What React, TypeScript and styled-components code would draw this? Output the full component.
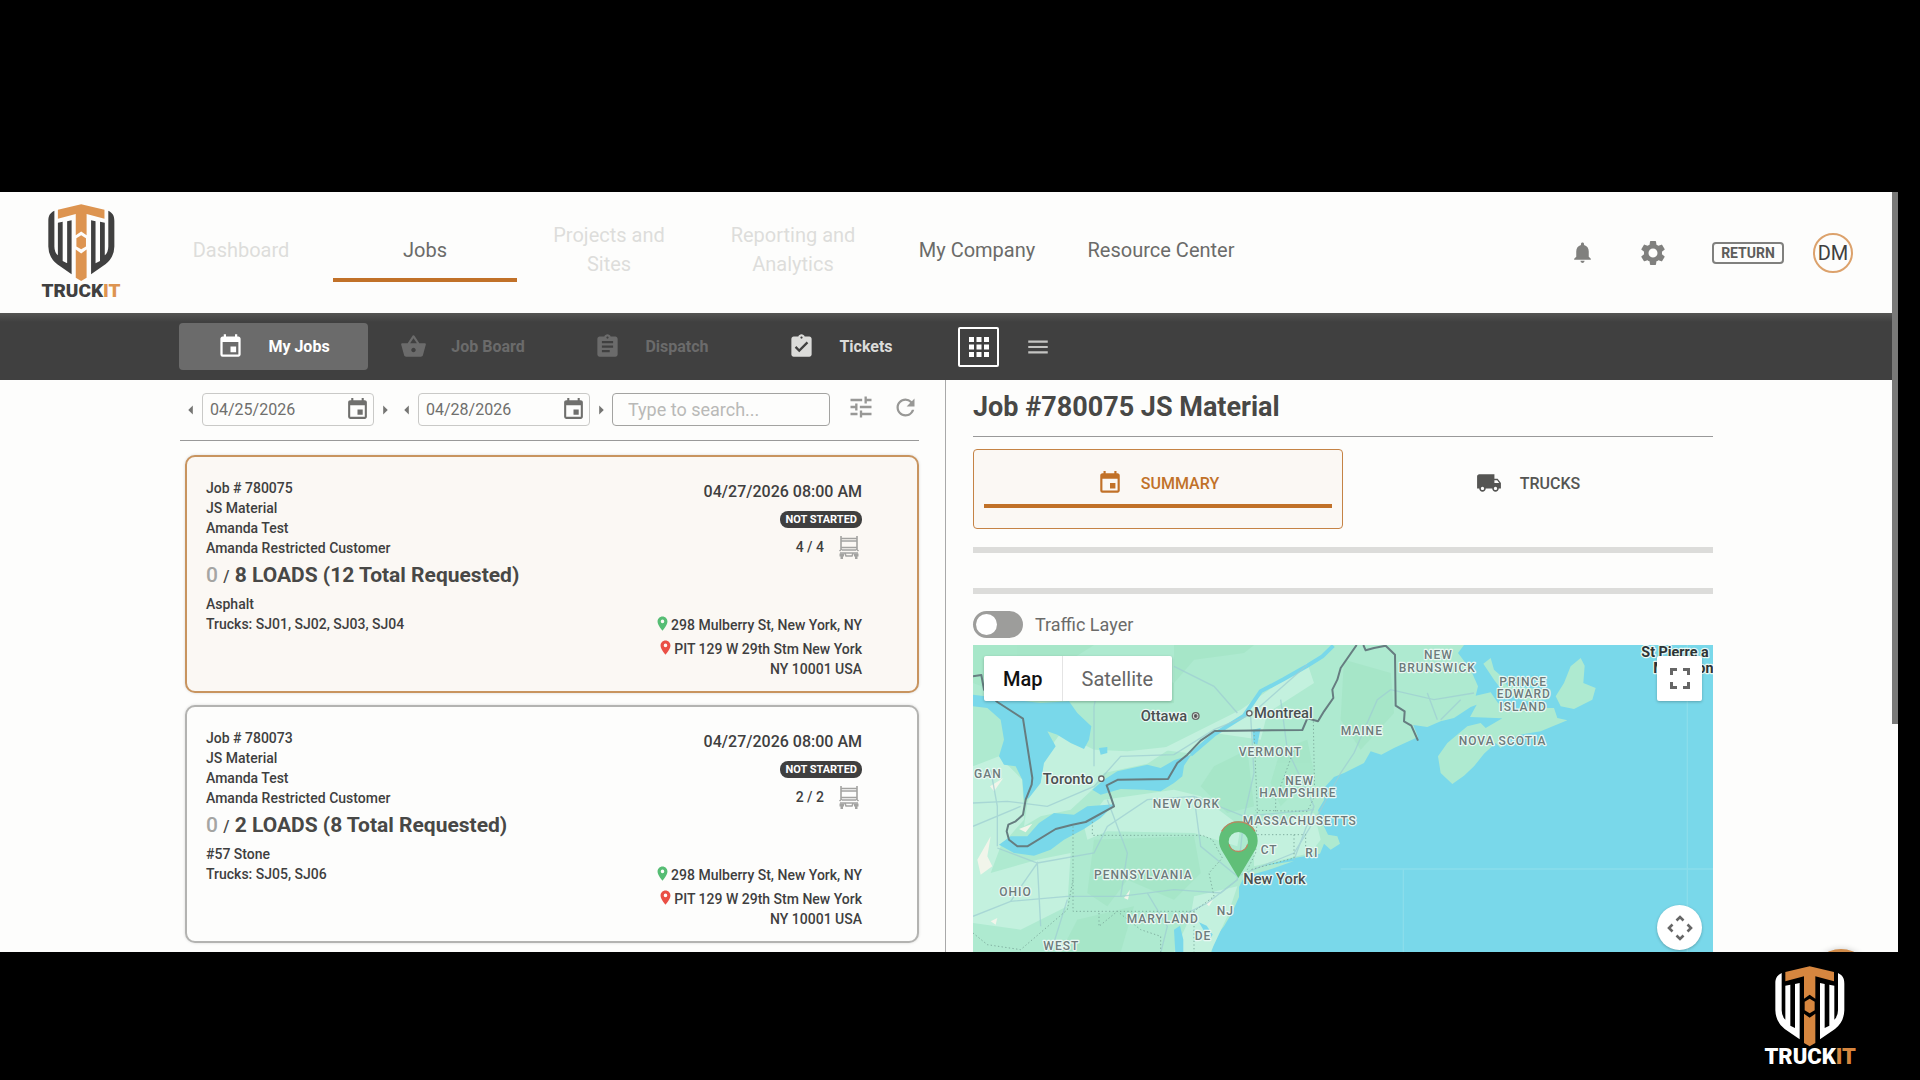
import React, { useState } from "react";
import styled, { createGlobalStyle } from "styled-components";
import {
  MdArrowLeft,
  MdArrowRight,
  MdApps,
  MdAssignment,
  MdAssignmentTurnedIn,
  MdEvent,
  MdLocalShipping,
  MdLocationOn,
  MdMenu,
  MdNotifications,
  MdRefresh,
  MdSettings,
  MdShoppingBasket,
  MdTune,
} from "react-icons/md";

const color = {
  page: "#fdfdfc",
  ink: "#3f3f3f",
  muted: "#6b6b69",
  faint: "#dddddb",
  line: "#a9a9a9",
  orange: "#c17128",
  cream: "#fbf8f4",
  bar: "#404040",
};

const GlobalStyle = createGlobalStyle`
  * { box-sizing: border-box; }
  body { margin: 0; background: #000; color: ${color.ink}; font-family: Roboto, "Liberation Sans", sans-serif; }
  button, input { font: inherit; color: inherit; }
  button { margin: 0; padding: 0; border: 0; background: none; cursor: pointer; }
  a { color: inherit; text-decoration: none; }
  svg { display: block; }
`;

const Stage = styled.div`
  display: grid;
  grid-template-rows: 192px minmax(0, 1fr) 128px;
  height: 100vh;
  overflow: hidden;
`;

const Screen = styled.div`
  grid-row: 2;
  position: relative;
  display: flex;
  margin-right: 22px;
  overflow: hidden;
  background: ${color.page};
`;

const Content = styled.div`
  flex: 1;
  min-width: 0;
  display: flex;
  flex-direction: column;
`;

const ScrollTrack = styled.div`
  width: 6px;
  background: ${color.page};
`;

const ScrollThumb = styled.div`
  height: 70%;
  background: #797978;
`;

const Header = styled.header`
  display: flex;
  min-height: 121px;
  padding: 0 39px 0 42px;
`;

const LogoBox = styled.a<{ $fg: string; $accent: string }>`
  display: flex;
  flex-direction: column;
  align-items: center;
  color: ${(p) => p.$fg};
  em {
    font-style: normal;
    color: ${(p) => p.$accent};
  }
`;

const LogoWord = styled.span<{ $size: number }>`
  font-family: "Liberation Sans Narrow", Roboto, sans-serif;
  font-weight: 900;
  font-size: ${(p) => p.$size}px;
  line-height: 20px;
  text-transform: uppercase;
`;

const HeaderLogo = styled.div`
  width: 78px;
  padding-top: 12px;
`;

const Nav = styled.nav`
  display: flex;
  align-items: flex-start;
  padding: 28px 0 0 29px;
`;

const NavLink = styled.a<{ $off?: boolean; $active?: boolean }>`
  display: flex;
  align-items: center;
  justify-content: center;
  width: 184px;
  height: 62px;
  padding: 2px 24px 0;
  border-bottom: 4px solid ${(p) => (p.$active ? color.orange : "transparent")};
  color: ${(p) => (p.$off ? color.faint : color.muted)};
  font-size: 20px;
  line-height: 29px;
  text-align: center;
`;

const WideNavLink = styled(NavLink)`
  padding: 2px 12px 0;
`;

const HeaderTools = styled.div`
  display: flex;
  align-items: center;
  margin-left: auto;
  color: #80807e;
`;

const IconButton = styled.button<{ $gap?: number }>`
  display: flex;
  align-items: center;
  justify-content: center;
  margin-right: ${(p) => p.$gap ?? 0}px;
`;

const ReturnButton = styled.button`
  height: 22px;
  width: 72px;
  margin-right: 29px;
  border: 2px solid #80807e;
  border-radius: 4px;
  color: #5d5d5b;
  font-size: 14px;
  font-weight: 700;
  line-height: 18px;
`;

const Avatar = styled.button`
  width: 40px;
  height: 40px;
  border: 2px solid #dca26c;
  border-radius: 50%;
  color: ${color.ink};
  font-size: 20px;
  line-height: 36px;
`;

const SubBar = styled.div`
  display: flex;
  align-items: center;
  min-height: 67px;
  padding-left: 179px;
  background: linear-gradient(#555553, ${color.bar} 9px);
`;

const SubTab = styled.button<{ $active?: boolean; $off?: boolean }>`
  display: flex;
  align-items: center;
  justify-content: center;
  gap: 24px;
  width: 189px;
  height: 47px;
  border-radius: 4px;
  background: ${(p) => (p.$active ? "#6b6b6b" : "transparent")};
  color: ${(p) => (p.$active ? "#fff" : p.$off ? "#6b6b6b" : "#dcdcda")};
  font-size: 16px;
  font-weight: 700;
`;

const Views = styled.div`
  display: flex;
  gap: 18px;
  padding-left: 23px;
`;

const ViewButton = styled.button<{ $active?: boolean }>`
  display: flex;
  align-items: center;
  justify-content: center;
  width: 41px;
  height: 40px;
  border: 2px solid ${(p) => (p.$active ? "#fff" : "transparent")};
  border-radius: 2px;
  color: ${(p) => (p.$active ? "#fff" : "#c4c4c2")};
`;

const Main = styled.main`
  flex: 1;
  min-height: 0;
  display: grid;
  grid-template-columns: 1fr 1fr;
`;

const ListPane = styled.section`
  min-width: 0;
  padding: 13px 26px 0 180px;
  border-right: 1px solid ${color.line};
`;

const Filters = styled.form`
  display: flex;
  align-items: flex-start;
  padding-bottom: 14px;
  border-bottom: 1px solid #999;
`;

const Step = styled.button`
  display: flex;
  align-items: center;
  justify-content: center;
  width: 22px;
  height: 33px;
  color: #757573;
`;

const DateField = styled.label`
  display: flex;
  align-items: center;
  justify-content: space-between;
  width: 172px;
  height: 33px;
  padding: 0 3px 0 7px;
  border: 1px solid #c9c9c7;
  border-radius: 4px;
  color: #6f6f6d;
  input {
    width: 110px;
    padding: 0;
    border: 0;
    background: none;
    font-size: 16px;
  }
`;

const Search = styled.input`
  flex: 1;
  min-width: 0;
  height: 33px;
  padding: 0 15px;
  border: 1px solid #a3a3a1;
  border-radius: 4px;
  background: none;
  font-size: 18px;
  &::placeholder {
    color: #b9b9b7;
    opacity: 1;
  }
`;

const FilterTools = styled.div`
  display: flex;
  gap: 17px;
  padding-left: 17px;
  color: #989896;
`;

const Cards = styled.div`
  display: flex;
  flex-direction: column;
  gap: 12px;
  padding: 14px 0 0 5px;
`;

const Card = styled.article<{ $active?: boolean }>`
  display: flex;
  justify-content: space-between;
  min-height: 238px;
  padding: 21px 55px 12px 19px;
  border: 2px solid ${(p) => (p.$active ? "#c8945f" : "#b3b3b1")};
  border-radius: 10px;
  background: ${(p) => (p.$active ? color.cream : color.page)};
  box-shadow: 0 0 3px rgba(0, 0, 0, 0.15);
  font-size: 14px;
  font-weight: 500;
  line-height: 20px;
`;

const CardText = styled.p`
  margin: 0;
`;

const Loads = styled.h3`
  margin: 0;
  color: #484846;
  font-size: 21px;
  font-weight: 700;
  line-height: 34px;
  span {
    color: #a5a5a3;
    font-weight: 500;
  }
  small {
    font-size: 16px;
    font-weight: 500;
  }
`;

const CardSide = styled.div`
  display: flex;
  flex-direction: column;
  align-items: flex-end;
  width: 220px;
  padding-top: 2px;
  text-align: right;
`;

const When = styled.time`
  font-size: 16px;
  line-height: 24px;
`;

const Badge = styled.span`
  margin-top: 7px;
  padding: 0 5px;
  border-radius: 8px;
  background: ${color.ink};
  color: #fff;
  font-size: 11px;
  font-weight: 700;
  line-height: 17px;
`;

const TruckCount = styled.div`
  display: flex;
  align-items: center;
  gap: 14px;
  height: 24px;
  margin-top: 7px;
  padding-right: 2px;
`;

const Addresses = styled.div`
  display: flex;
  flex-direction: column;
  gap: 4px;
  margin-top: auto;
`;

const Address = styled.p`
  margin: 0;
  svg {
    display: inline;
    vertical-align: top;
  }
`;

const DetailPane = styled.section`
  min-width: 0;
  display: flex;
  flex-direction: column;
  padding: 10px 179px 0 27px;
`;

const Title = styled.h1`
  margin: 0;
  padding-bottom: 12px;
  border-bottom: 1px solid #999;
  color: #484846;
  font-size: 27px;
  font-weight: 700;
  line-height: 34px;
`;

const Tabs = styled.div`
  display: grid;
  grid-template-columns: 1fr 1fr;
  margin-top: 12px;
`;

const Tab = styled.button<{ $active?: boolean }>`
  height: 80px;
  padding: 0 10px 8px;
  border: 1px solid ${(p) => (p.$active ? "#c58345" : "transparent")};
  border-radius: 4px;
  background: ${(p) => (p.$active ? color.cream : "transparent")};
  color: ${(p) => (p.$active ? color.orange : "#555553")};
  font-size: 16px;
  font-weight: 500;
`;

const TabLabel = styled.span<{ $active?: boolean }>`
  display: flex;
  align-items: center;
  justify-content: center;
  gap: 18px;
  height: 46px;
  border-bottom: 4px solid ${(p) => (p.$active ? color.orange : "transparent")};
`;

const Bar = styled.hr<{ $gap: number }>`
  width: 100%;
  height: 6px;
  margin: ${(p) => p.$gap}px 0 0;
  border: 0;
  background: #dcdcda;
`;

const Traffic = styled.label`
  display: flex;
  align-items: center;
  gap: 12px;
  margin: 17px 0 7px;
  color: ${color.muted};
  font-size: 18px;
  line-height: 27px;
`;

const Switch = styled.input`
  appearance: none;
  width: 50px;
  height: 27px;
  margin: 0;
  padding: 3px;
  border-radius: 14px;
  background: #9d9d9b;
  cursor: pointer;
  &::before {
    content: "";
    display: block;
    width: 21px;
    height: 21px;
    border-radius: 50%;
    background: #fff;
  }
  &:checked {
    background: ${color.orange};
  }
  &:checked::before {
    margin-left: auto;
  }
`;

const MapBox = styled.div`
  position: relative;
  flex: 1;
  min-height: 0;
  overflow: hidden;
  background: #79d8ea;
`;

const MapSvg = styled.svg`
  width: 100%;
  height: 100%;
  font-family: Roboto, sans-serif;
`;

const MapTypes = styled.div`
  position: absolute;
  top: 11px;
  left: 11px;
  display: flex;
  border-radius: 2px;
  background: #fff;
  box-shadow: 0 1px 3px rgba(0, 0, 0, 0.25);
`;

const MapType = styled.button<{ $active?: boolean }>`
  height: 45px;
  padding: 0 19px;
  color: ${(p) => (p.$active ? "#111" : "#666")};
  font-size: 20px;
  font-weight: ${(p) => (p.$active ? 500 : 400)};
  & + & {
    border-left: 1px solid #e4e4e4;
  }
`;

const MapControl = styled.button<{ $round?: boolean }>`
  position: absolute;
  right: 11px;
  ${(p) => (p.$round ? "bottom: 2px;" : "top: 11px;")}
  display: flex;
  align-items: center;
  justify-content: center;
  width: 45px;
  height: 45px;
  border-radius: ${(p) => (p.$round ? "50%" : "2px")};
  background: #fff;
  box-shadow: 0 1px 3px rgba(0, 0, 0, 0.25);
`;

const HelpButton = styled.button`
  position: absolute;
  right: 27px;
  bottom: -57px;
  width: 60px;
  height: 60px;
  border-radius: 50%;
  background: #d08a48;
  box-shadow: 0 0 6px rgba(0, 0, 0, 0.2);
`;

const Footer = styled.footer`
  grid-row: 3;
  display: flex;
  justify-content: flex-end;
  padding: 14px 64px 0 0;
`;

function Logo({ fg, accent, width, wordSize }: { fg: string; accent: string; width: number; wordSize: number }) {
  const wing =
    "M131 128C118 135 112 142 112 160V240Q113 275 140 296L185 327V158L171 161V293L157 286V163L142 166V268Q131 258 131 240Z";
  return (
    <LogoBox href="#" $fg={fg} $accent={accent}>
      <svg width={width} viewBox="111 107 210 242" aria-hidden="true">
        <g fill={fg}>
          <path d={wing} />
          <path d={wing} transform="translate(431 0) scale(-1 1)" />
        </g>
        <g fill={accent}>
          <path d="M215 108L142 125V153L198 138V205L215 193L232 205V138L288 153V125Z" />
          <path d="M215 205L230 214V240L215 249L200 240V214Z" />
          <path d="M198 250L215 262L232 250V338L215 348L198 338Z" />
        </g>
      </svg>
      <LogoWord $size={wordSize}>
        Truck<em>IT</em>
      </LogoWord>
    </LogoBox>
  );
}

function TruckFront() {
  return (
    <svg width="22" height="24" viewBox="0 0 22 24" fill="none" stroke="#a3a3a1" strokeWidth="1.6" aria-hidden="true">
      <path d="M3 1V15M19 1V15M3 3.5H19M3 6H19M3 12.5H19M4 15H18M2 18H20M1.5 16L4 14M20.5 16L18 14M7 18.5L8 21H14L15 18.5" />
      <path d="M1.500 20H6M16 20H20.500M2.500 22.500H5M17 22.500H19.500" strokeWidth="3" />
    </svg>
  );
}

type Job = { id: string; loads: string; material: string; trucks: string; count: string };

const jobs: Job[] = [
  { id: "780075", loads: "8 LOADS (12 Total Requested)", material: "Asphalt", trucks: "SJ01, SJ02, SJ03, SJ04", count: "4 / 4" },
  { id: "780073", loads: "2 LOADS (8 Total Requested)", material: "#57 Stone", trucks: "SJ05, SJ06", count: "2 / 2" },
];

function JobCard({ job, active }: { job: Job; active: boolean }) {
  return (
    <Card $active={active}>
      <div>
        <CardText>Job # {job.id}</CardText>
        <CardText>JS Material</CardText>
        <CardText>Amanda Test</CardText>
        <CardText>Amanda Restricted Customer</CardText>
        <Loads>
          <span>0</span> <small>/</small> {job.loads}
        </Loads>
        <CardText>{job.material}</CardText>
        <CardText>Trucks: {job.trucks}</CardText>
      </div>
      <CardSide>
        <When>04/27/2026 08:00 AM</When>
        <Badge>NOT STARTED</Badge>
        <TruckCount>
          {job.count}
          <TruckFront />
        </TruckCount>
        <Addresses>
          <Address>
            <MdLocationOn size={17} color="#56bd74" />
            298 Mulberry St, New York, NY
          </Address>
          <Address>
            <MdLocationOn size={17} color="#ea4f45" />
            PIT 129 W 29th Stm New York
            <br />
            NY 10001 USA
          </Address>
        </Addresses>
      </CardSide>
    </Card>
  );
}

const land = [
  "M0 0H1522L1492 40L1530 90L1552 140L1545 168L1590 158L1612 190L1650 215L1700 205L1780 205L1790 235L1820 242L1740 275L1680 285L1640 300L1620 325L1605 310L1570 342L1540 380L1510 408L1475 433L1440 400L1432 350L1460 310L1520 260L1560 250L1575 265L1625 236L1528 232L1548 195L1530 202L1480 235L1440 245L1400 262L1358 256L1372 292L1300 325L1262 345L1230 335L1210 370L1150 400L1120 412L1095 440L1090 482L1072 512L1086 552L1102 585L1130 590L1138 612L1110 630L1090 612L1078 642L1000 655L900 680L1000 664L920 692L850 712L835 742L835 772L815 818L790 860L762 895L752 940H0Z",
  "M1860 55L1872 78L1868 130L1905 145L1895 180L1840 208L1800 200L1785 170L1810 130L1830 80Z",
  "M1568 72L1590 55L1600 90L1625 112L1640 140L1770 150L1765 178L1700 185L1630 160L1600 120Z",
];

const plains = [
  "M250 350L300 280L400 330L500 335L640 320L560 372L430 400L395 450L330 510L240 530L190 560L200 490Z",
  "M37 380L115 350L185 420L190 540L120 620L90 700L230 660L330 640L320 800L180 870L37 850Z",
  "M430 480L640 450L720 470L840 560L830 620L700 580L440 575L380 600L370 560Z",
  "M600 330L840 210L1040 70L1060 130L920 220L900 300L760 280L680 340Z",
  "M700 770L830 740L800 830L750 937H640L690 830Z",
  "M880 560L1060 520L1080 600L1050 640L880 680Z",
];

const forest = [
  "M37 16H400L330 60L440 120L520 90L640 130L700 60L850 40L880 16H640V190H200L37 130Z",
  "M760 380L860 330L880 500L800 520L720 440Z",
  "M400 600L700 590L720 700L640 780L500 720L440 800L380 760Z",
  "M960 330L1040 300L1060 400L960 500L930 430Z",
  "M1150 60L1290 100L1300 220L1200 330L1140 240Z",
  "M350 840L520 800L480 937H300Z",
];

const water = [
  "M37 165L240 190L325 185L350 220L392 260L385 300L370 328L330 310L290 285L260 275L285 320L250 370L240 430L205 475L190 480L185 420L165 380L130 375L115 350L130 300L120 240L80 205L37 200Z",
  "M395 450L430 420L470 395L560 375L600 385L640 362L692 345L670 378L665 410L640 430L600 455L550 450L480 448L420 465Z",
  "M115 615L150 590L200 590L235 550L280 520L340 525L380 500L462 494L420 535L370 568L310 600L270 630L220 648L160 640Z",
  "M640 870L658 858L668 900L668 940H644Z",
  "M715 848L738 858L756 885L745 900Z",
  "M415 325L440 322L440 340L420 345Z",
  "M875 270L900 265L890 315L878 310Z",
];

const roads = [
  "M37 490L140 485L260 500L400 440L480 350L640 345L760 270L870 225L1040 75",
  "M37 830L150 785L320 770L480 770L640 750L780 760L830 720",
  "M110 625L230 670L400 640L440 560L560 480L700 470L850 530L1060 510",
  "M870 230L880 400L850 530L830 720L740 790L660 830",
  "M640 80L760 140L830 220M430 60L400 200L400 380",
  "M150 785L230 670L240 860M480 770L500 640L440 480",
  "M700 470L720 620L830 710L1000 640L1075 520L1140 400L1180 340L1250 180L1290 150L1420 180L1540 160",
  "M1400 160L1430 240M1440 240L1500 180M90 390L110 500L110 620M37 560L180 500",
  "M560 760L620 860L600 940M320 780L270 940M1000 660L1060 500L980 330L960 180",
];

type Label = { x: number; y: number; text: string; city?: boolean };

const labels: Label[] = [
  { x: 540, y: 244, text: "Ottawa", city: true },
  { x: 880, y: 236, text: "Montreal", city: true },
  { x: 246, y: 432, text: "Toronto", city: true },
  { x: 848, y: 733, text: "New York", city: true },
  { x: 40, y: 414, text: "GAN" },
  { x: 576, y: 506, text: "NEW YORK" },
  { x: 834, y: 350, text: "VERMONT" },
  { x: 974, y: 436, text: "NEW" },
  { x: 896, y: 473, text: "HAMPSHIRE" },
  { x: 846, y: 556, text: "MASSACHUSETTS" },
  { x: 900, y: 643, text: "CT" },
  { x: 1034, y: 653, text: "RI" },
  { x: 400, y: 717, text: "PENNSYLVANIA" },
  { x: 116, y: 770, text: "OHIO" },
  { x: 768, y: 827, text: "NJ" },
  { x: 498, y: 850, text: "MARYLAND" },
  { x: 702, y: 900, text: "DE" },
  { x: 248, y: 930, text: "WEST" },
  { x: 1140, y: 286, text: "MAINE" },
  { x: 1390, y: 58, text: "NEW" },
  { x: 1314, y: 96, text: "BRUNSWICK" },
  { x: 1616, y: 138, text: "PRINCE" },
  { x: 1608, y: 176, text: "EDWARD" },
  { x: 1616, y: 213, text: "ISLAND" },
  { x: 1494, y: 316, text: "NOVA SCOTIA" },
];

const MapLabel = styled.text<{ $city?: boolean }>`
  paint-order: stroke;
  fill: ${(p) => (p.$city ? "#4a4f50" : "#6d7b7b")};
  font-size: ${(p) => (p.$city ? 44 : 36)}px;
  font-weight: 500;
  letter-spacing: ${(p) => (p.$city ? 0 : 3)}px;
`;

const IslandLabel = styled.text`
  paint-order: stroke;
  fill: #2d3436;
  font-size: 43px;
  font-weight: 700;
`;

function MapDrawing() {
  return (
    <MapSvg viewBox="37 16 2223 921" preserveAspectRatio="xMinYMin slice" role="img" aria-label="Job map">
      <g stroke="#8addeb" strokeWidth="4">
        <path d="M1140 688H2260M2180 16V937M1328 690V937" />
      </g>
      <g fill="#aeead0">
        {land.map((d) => (
          <path key={d} d={d} />
        ))}
      </g>
      <g fill="#c3f1de">
        {plains.map((d) => (
          <path key={d} d={d} />
        ))}
      </g>
      <g fill="#9fe3c1" opacity="0.5">
        {forest.map((d) => (
          <path key={d} d={d} />
        ))}
      </g>
      <g fill="#79d8ea">
        {water.map((d) => (
          <path key={d} d={d} />
        ))}
      </g>
      <path d="M690 345L760 285L850 228L900 155L970 118L1040 78L1085 50L1118 18" fill="none" stroke="#79d8ea" strokeWidth="12" />
      <g fill="#f1f5ea">
        <path d="M175 568L215 552L195 578Z" />
        <path d="M88 440L128 415L100 455Z" />
        <path d="M50 660L90 590L80 650L95 680L60 705Z" />
        <path d="M90 845L110 835L105 855Z" />
        <path d="M735 790L758 778L745 800Z" />
        <path d="M490 775L508 750L502 780Z" />
      </g>
      <g fill="none" stroke="#9fcfd3" strokeWidth="4" opacity="0.75">
        {roads.map((d) => (
          <path key={d} d={d} />
        ))}
      </g>
      <g fill="none" stroke="#7fae9f" strokeWidth="3" strokeDasharray="4 7">
        <path d="M337 560V815H700L760 770L745 700L785 655L755 600L725 587H395V540" />
        <path d="M880 275L890 510L885 640L860 690M1058 245L1062 470L1040 515L885 512M945 515V480L1000 330M890 585H1035V625M1000 585V655L870 690" />
        <path d="M337 720L320 810L250 870L180 930L80 915L37 880M700 815V937M415 820V860L470 815L540 870L600 890V937" />
      </g>
      <g fill="none" stroke="#667d80" strokeWidth="6" strokeLinejoin="round">
        <path d="M37 110L62 106L70 150L110 187L187 237L215 415L213 435L195 480L187 525L165 545L143 555L138 575L145 600L170 620L200 620L285 568L335 555L375 547L460 500L450 470L438 437L472 420L622 418L650 370L680 345L720 303L762 274L1025 271L1040 236L1072 245L1090 215L1118 175L1115 150L1130 120L1140 85L1188 16" />
        <path d="M1208 16L1215 32L1240 25L1275 18L1303 45L1305 198L1332 215L1330 245L1352 258L1372 303" />
      </g>
      <g fill="#eefaf5" stroke="#666" strokeWidth="4">
        <circle cx="705" cy="229" r="10" />
        <circle cx="705" cy="229" r="4" fill="#444" />
        <circle cx="866" cy="221" r="8" />
        <circle cx="422" cy="417" r="8" />
      </g>
      <g stroke="#e9f8f3" strokeWidth="7" strokeLinejoin="round">
        {labels.map((l) => (
          <MapLabel key={`${l.text}${l.x}`} x={l.x} y={l.y} $city={l.city}>
            {l.text}
          </MapLabel>
        ))}
        <IslandLabel x="2042" y="53">St Pierre a</IslandLabel>
        <IslandLabel x="2078" y="99">Miquelon</IslandLabel>
      </g>
      <path
        d="M833 715L788 640Q775 620 775 603A58 58 0 0 1 891 603Q891 620 878 640ZM833 577A29 29 0 1 0 833 635A29 29 0 1 0 833 577Z"
        fill="#60bf78"
        fillRule="evenodd"
      />
      <g fill="none" stroke="#bd8560" strokeWidth="4">
        <path d="M783 575A58 58 0 0 1 883 575" />
        <path d="M805 614A29 29 0 0 0 861 614" />
      </g>
    </MapSvg>
  );
}

export default function App() {
  const [selected, setSelected] = useState("summary");
  const [view, setView] = useState("grid");
  const [traffic, setTraffic] = useState(false);
  return (
    <Stage>
      <GlobalStyle />
      <Screen>
        <Content>
          <Header>
            <HeaderLogo>
              <Logo fg="#404040" accent="#dd9450" width={67} wordSize={19} />
            </HeaderLogo>
            <Nav>
              <NavLink href="#" $off>Dashboard</NavLink>
              <NavLink href="#" $active>Jobs</NavLink>
              <NavLink href="#" $off>Projects and Sites</NavLink>
              <NavLink href="#" $off>Reporting and Analytics</NavLink>
              <WideNavLink href="#">My Company</WideNavLink>
              <WideNavLink href="#">Resource Center</WideNavLink>
            </Nav>
            <HeaderTools>
              <IconButton aria-label="Notifications" $gap={43}><MdNotifications size={25} /></IconButton>
              <IconButton aria-label="Settings" $gap={44}><MdSettings size={30} /></IconButton>
              <ReturnButton>RETURN</ReturnButton>
              <Avatar>DM</Avatar>
            </HeaderTools>
          </Header>
          <SubBar>
            <SubTab $active><MdEvent size={27} />My Jobs</SubTab>
            <SubTab $off><MdShoppingBasket size={27} />Job Board</SubTab>
            <SubTab $off><MdAssignment size={27} />Dispatch</SubTab>
            <SubTab><MdAssignmentTurnedIn size={27} />Tickets</SubTab>
            <Views>
              <ViewButton aria-label="Grid view" $active={view === "grid"} onClick={() => setView("grid")}>
                <MdApps size={30} />
              </ViewButton>
              <ViewButton aria-label="List view" $active={view === "list"} onClick={() => setView("list")}>
                <MdMenu size={26} />
              </ViewButton>
            </Views>
          </SubBar>
          <Main>
            <ListPane>
              <Filters onSubmit={(e) => e.preventDefault()}>
                <Step type="button" aria-label="Earlier start"><MdArrowLeft size={24} /></Step>
                <DateField>
                  <input aria-label="Start date" defaultValue="04/25/2026" />
                  <MdEvent size={25} />
                </DateField>
                <Step type="button" aria-label="Later start"><MdArrowRight size={24} /></Step>
                <Step type="button" aria-label="Earlier end"><MdArrowLeft size={24} /></Step>
                <DateField>
                  <input aria-label="End date" defaultValue="04/28/2026" />
                  <MdEvent size={25} />
                </DateField>
                <Step type="button" aria-label="Later end"><MdArrowRight size={24} /></Step>
                <Search aria-label="Search jobs" placeholder="Type to search..." />
                <FilterTools>
                  <IconButton type="button" aria-label="Filters"><MdTune size={28} /></IconButton>
                  <IconButton type="button" aria-label="Refresh"><MdRefresh size={27} /></IconButton>
                </FilterTools>
              </Filters>
              <Cards>
                {jobs.map((job, i) => (
                  <JobCard key={job.id} job={job} active={i === 0} />
                ))}
              </Cards>
            </ListPane>
            <DetailPane>
              <Title>Job #780075 JS Material</Title>
              <Tabs>
                <Tab $active={selected === "summary"} onClick={() => setSelected("summary")}>
                  <TabLabel $active={selected === "summary"}><MdEvent size={26} />SUMMARY</TabLabel>
                </Tab>
                <Tab $active={selected === "trucks"} onClick={() => setSelected("trucks")}>
                  <TabLabel $active={selected === "trucks"}><MdLocalShipping size={26} />TRUCKS</TabLabel>
                </Tab>
              </Tabs>
              <Bar $gap={18} />
              <Bar $gap={35} />
              <Traffic>
                <Switch type="checkbox" checked={traffic} onChange={(e) => setTraffic(e.target.checked)} />
                Traffic Layer
              </Traffic>
              <MapBox>
                <MapDrawing />
                <MapTypes>
                  <MapType $active>Map</MapType>
                  <MapType>Satellite</MapType>
                </MapTypes>
                <MapControl aria-label="Full screen">
                  <svg width="20" height="21" viewBox="0 0 20 21" fill="none" stroke="#666" strokeWidth="3">
                    <path d="M1.500 7V1.500H7M13 1.500H18.500V7M18.500 14V19.500H13M7 19.500H1.500V14" />
                  </svg>
                </MapControl>
                <MapControl $round aria-label="Pan map">
                  <svg width="26" height="26" viewBox="0 0 26 26" fill="none" stroke="#666" strokeWidth="2.600">
                    <path d="M9.500 5.500L13 2L16.500 5.500M9.500 20.500L13 24L16.500 20.500M5.500 9.500L2 13L5.500 16.500M20.500 9.500L24 13L20.500 16.500" />
                  </svg>
                </MapControl>
              </MapBox>
            </DetailPane>
          </Main>
        </Content>
        <ScrollTrack>
          <ScrollThumb />
        </ScrollTrack>
        <HelpButton aria-label="Help" />
      </Screen>
      <Footer>
        <Logo fg="#ffffff" accent="#d6863f" width={70} wordSize={22} />
      </Footer>
    </Stage>
  );
}
